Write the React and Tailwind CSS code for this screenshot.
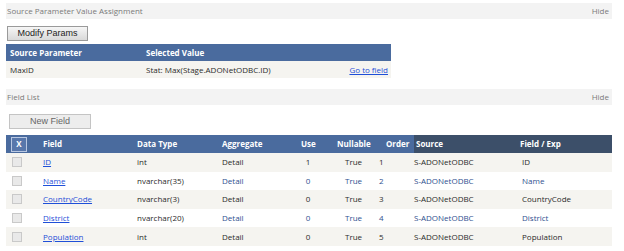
import React from 'react';

const rows = [
  { field: 'ID', type: 'int', use: '1', order: '1', exp: 'ID' },
  { field: 'Name', type: 'nvarchar(35)', use: '0', order: '2', exp: 'Name' },
  { field: 'CountryCode', type: 'nvarchar(3)', use: '0', order: '3', exp: 'CountryCode' },
  { field: 'District', type: 'nvarchar(20)', use: '0', order: '4', exp: 'District' },
  { field: 'Population', type: 'int', use: '0', order: '5', exp: 'Population' }
];

function SectionBar({ title }) {
  return (
    <div className="flex h-[16px] items-center justify-between bg-[#f3f3f3] pl-[1px] pr-[3px] text-[8px] text-[#7a7a7a]">
      <span>{title}</span>
      <span>Hide</span>
    </div>
  );
}

export default function App() {
  return (
    <div className="w-[624px] bg-white px-[6px] pt-[3px] font-['Open_Sans',sans-serif] text-[8px] leading-none text-[#2b2b2b]">
      <div className="w-[606px]">
        {/* Source parameters */}
        <SectionBar title="Source Parameter Value Assignment" />

        <button className="ml-[1px] mt-[7px] flex h-[15px] w-[81px] items-center justify-center border border-[#9a9a9a] bg-gradient-to-b from-[#f6f6f6] to-[#d9d9d9] font-['Liberation_Sans',sans-serif] text-[9px] text-[#222]">
          Modify Params
        </button>

        <div className="mt-[3px] w-[385px]">
          <div className="flex h-[17px] items-center bg-[#4a6b9e] font-bold text-white">
            <span className="w-[140px] pl-[4px]">Source Parameter</span>
            <span>Selected Value</span>
          </div>
          <div className="flex h-[17px] items-center bg-[#f5f4f0]">
            <span className="w-[140px] pl-[4px]">MaxID</span>
            <span className="flex-1">Stat: Max(Stage.ADONetODBC.ID)</span>
            <a href="#" className="pr-[3px] text-[#1f4fd8] underline">Go to field</a>
          </div>
        </div>

        {/* Field list */}
        <div className="mt-[11px]">
          <SectionBar title="Field List" />
        </div>

        <button className="ml-[3px] mt-[9px] flex h-[15px] w-[82px] items-center justify-center border border-[#c4c4c4] bg-[#ededed] font-['Liberation_Sans',sans-serif] text-[9px] text-[#666]">
          New Field
        </button>

        <div className="mt-[6px]">
          <div className="flex h-[18px] items-center font-bold text-white">
            <div className="flex h-full w-[408px] items-center bg-[#4a6b9e]">
              <span className="ml-[5px] flex h-[15px] w-[16px] items-center justify-center border border-[#b9c8e2] bg-[#5877ab]">X</span>
              <span className="ml-[16px] w-[94px]">Field</span>
              <span className="w-[85px]">Data Type</span>
              <span className="w-[79px]">Aggregate</span>
              <span className="w-[36px]">Use</span>
              <span className="w-[49px]">Nullable</span>
              <span>Order</span>
            </div>
            <div className="flex h-full flex-1 items-center bg-[#3c4f69]">
              <span className="w-[106px] pl-[2px]">Source</span>
              <span>Field / Exp</span>
            </div>
          </div>

          {rows.map((r, i) => {
            const alt = i % 2 === 1;
            const c = alt ? 'text-[#2f4f8f]' : 'text-[#2b2b2b]';
            return (
              <div
                key={r.field}
                className={`flex h-[18.6px] items-center ${alt ? 'bg-white' : 'bg-[#f5f4f0]'}`}
              >
                <span className="ml-[6px] h-[10px] w-[10px] border border-[#c9c9c9] bg-[#e9e9e9]" />
                <a href="#" className="ml-[21px] w-[94px] text-[#1f4fd8] underline">{r.field}</a>
                <span className="w-[85px]">{r.type}</span>
                <span className={`w-[79px] ${c}`}>Detail</span>
                <span className={`w-[14px] text-center ${c}`}>{r.use}</span>
                <span className={`ml-[30px] w-[22px] ${c}`}>True</span>
                <span className={`ml-[12px] w-[35px] ${c}`}>{r.order}</span>
                <span className={`w-[108px] ${c}`}>S-ADONetODBC</span>
                <span className={c}>{r.exp}</span>
              </div>
            );
          })}
        </div>
      </div>
    </div>
  );
}
